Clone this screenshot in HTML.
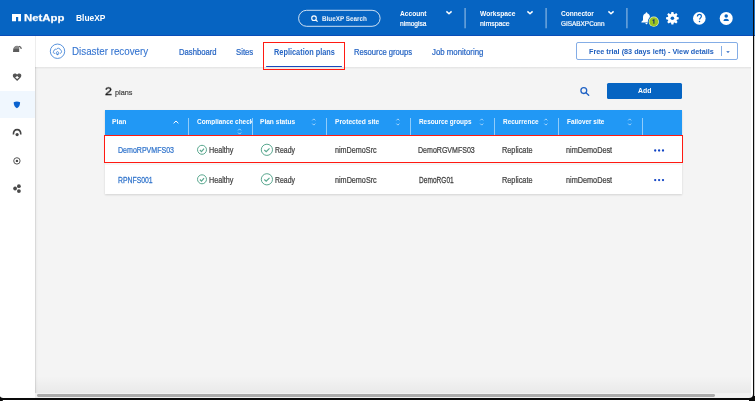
<!DOCTYPE html>
<html><head><meta charset="utf-8">
<style>
*{box-sizing:border-box;margin:0;padding:0}
html,body{width:755px;height:401px;overflow:hidden;background:#fff;font-family:"Liberation Sans",sans-serif}
div,svg{position:absolute}
.t{white-space:nowrap;line-height:1;transform-origin:0 0.8467em;will-change:transform}
</style></head><body>
<!-- top bar -->
<div style="left:0;top:0;width:755px;height:35px;background:#0664c2"></div>
<div style="left:0;top:35px;width:755px;height:1px;background:#0a4db8"></div>
<svg style="left:0;top:0" width="755" height="36">
<path d="M12,14 H21 V21.2 H18.2 V17 H16 V21.2 H12 Z" fill="#fff"/>
<rect x="298.6" y="10.3" width="81.5" height="16" rx="8" fill="none" stroke="rgba(255,255,255,0.8)" stroke-width="1"/>
<circle cx="314" cy="18.2" r="2.3" fill="none" stroke="#fff" stroke-width="1.1"/>
<line x1="315.8" y1="20" x2="317.6" y2="21.6" stroke="#fff" stroke-width="1.2"/>
<polyline points="446.4,11.4 449,13.7 451.6,11.4" fill="none" stroke="#fff" stroke-width="1.5" stroke-linejoin="round"/>
<polyline points="527.4,11.4 530,13.7 532.6,11.4" fill="none" stroke="#fff" stroke-width="1.5" stroke-linejoin="round"/>
<polyline points="608.4,11.4 611,13.7 613.6,11.4" fill="none" stroke="#fff" stroke-width="1.5" stroke-linejoin="round"/>
<rect x="464.4" y="8" width="1.4" height="20.3" fill="rgba(255,255,255,0.45)"/>
<rect x="545.4" y="8" width="1.4" height="20.3" fill="rgba(255,255,255,0.45)"/>
<rect x="626.2" y="8" width="1.4" height="20.3" fill="rgba(255,255,255,0.45)"/>
<!-- bell -->
<path d="M646.5,12.3 C646,12.3 645.7,12.7 645.7,13.2 C643.8,13.8 643,15.4 643,17.4 L643,19.6 C643,20.6 642.2,21.2 641.4,21.7 L641.4,22.5 L651.6,22.5 L651.6,21.7 C650.8,21.2 650,20.6 650,19.6 L650,17.4 C650,15.4 649.2,13.8 647.3,13.2 C647.3,12.7 647,12.3 646.5,12.3 Z" fill="#fff"/>
<path d="M645.4,23 C645.5,23.9 646,24.3 646.5,24.3 C647,24.3 647.5,23.9 647.6,23 Z" fill="#fff"/>
<circle cx="653.8" cy="21.7" r="6" fill="#0664c2"/>
<circle cx="653.8" cy="21.7" r="5.1" fill="#e8f0c0"/>
<circle cx="653.8" cy="21.7" r="4.5" fill="#9cc423"/>
<path d="M652.6,20.5 L653.9,19.8 L653.9,23.8" fill="none" stroke="#16306a" stroke-width="1.1"/>
<!-- gear -->
<path fill="#fff" fill-rule="evenodd" d="M671.03,13.81 L671.40,11.98 L673.40,11.98 L673.77,13.81 L674.61,14.15 L676.16,13.12 L677.58,14.54 L676.55,16.09 L676.89,16.93 L678.72,17.30 L678.72,19.30 L676.89,19.67 L676.55,20.51 L677.58,22.06 L676.16,23.48 L674.61,22.45 L673.77,22.79 L673.40,24.62 L671.40,24.62 L671.03,22.79 L670.19,22.45 L668.64,23.48 L667.22,22.06 L668.25,20.51 L667.91,19.67 L666.08,19.30 L666.08,17.30 L667.91,16.93 L668.25,16.09 L667.22,14.54 L668.64,13.12 L670.19,14.15 Z"/>
<circle cx="672.4" cy="18.3" r="1.8" fill="#0664c2"/>
<!-- help -->
<circle cx="699.3" cy="18.4" r="6.3" fill="#fff"/>
<path d="M697.4,16.4 C697.4,15 698.2,14.3 699.4,14.3 C700.6,14.3 701.4,15.1 701.4,16.2 C701.4,17.7 699.6,17.9 699.6,19.6" fill="none" stroke="#0664c2" stroke-width="1.15"/>
<circle cx="699.5" cy="21.4" r="0.75" fill="#0664c2"/>
<!-- user -->
<circle cx="726.2" cy="18.4" r="6.5" fill="#fff"/>
<circle cx="726.2" cy="16.1" r="1.75" fill="#0664c2"/>
<path d="M723.5,21 C723.5,19.6 724.6,18.8 726.2,18.8 C727.8,18.8 728.9,19.6 728.9,21 Z" fill="#0664c2"/>
</svg>

<!-- sidebar -->
<div style="left:0;top:36px;width:35px;height:365px;background:#fff"></div>
<div style="left:0;top:90.7px;width:35px;height:27.5px;background:#f0f7fe"></div>
<!-- main -->
<div style="left:35px;top:36px;width:716px;height:357px;background:#f4f4f4"></div>
<div style="left:35px;top:36px;width:3px;height:357px;background:linear-gradient(90deg,rgba(0,0,0,0.05),rgba(0,0,0,0))"></div>
<div style="left:35px;top:36px;width:716px;height:31px;background:#fff"></div>
<div style="left:35px;top:66.6px;width:716px;height:2.6px;background:linear-gradient(rgba(0,0,0,0.07),rgba(0,0,0,0.01))"></div>
<div style="left:34.6px;top:36px;width:1.4px;height:357px;background:rgba(0,0,0,0.07)"></div>
<div style="left:35px;top:376px;width:716px;height:17px;background:linear-gradient(rgba(0,0,0,0),rgba(0,0,0,0.045))"></div>
<div style="left:35px;top:393px;width:716px;height:5px;background:#f1f1f1"></div>
<div style="left:37px;top:394px;width:678px;height:2.8px;background:#ababab;border-radius:1.4px"></div>

<svg style="left:0;top:36px" width="35" height="170" viewBox="0 36 35 170">
<!-- cloud -->
<path d="M13,52 L13.2,49.6 C13.5,47.6 14.8,46 16.8,45.8 L18.2,45.9 C18.9,46.6 19.2,47.6 19.2,49 L19.2,52 Z" fill="#5c5c5c"/>
<path d="M13.3,48.8 C13.8,47.2 15,46.1 16.8,45.9 L18.2,46 C18.7,46.6 19,47.6 19.1,48.8 Z" fill="#8a8a8a"/>
<path d="M18.9,46.4 C20.3,46.6 21.2,47.4 21.3,48.9" fill="none" stroke="#555" stroke-width="1.2"/>
<!-- heart -->
<path d="M17.1,81 L13.6,77.4 C12.4,76 12.6,73.6 14.8,73.4 C16,73.3 16.7,74 17.1,74.6 C17.5,74 18.2,73.3 19.4,73.4 C21.6,73.6 21.8,76 20.6,77.4 Z" fill="#555"/>
<path d="M17.1,75.9 V79.1 M15.5,77.5 H18.7" stroke="#fff" stroke-width="1.2"/>
<!-- shield -->
<path d="M13.7,102.2 C15.5,101.2 18.3,101.2 20.1,102.2 C20.1,105.2 19,107.3 16.9,108.2 C14.8,107.3 13.7,105.2 13.7,102.2 Z" fill="#0a62cf"/>
<!-- arc -->
<path d="M13.4,134.6 C13.4,131.4 15,129.6 17.1,129.6 C19.2,129.6 20.8,131.4 20.8,134.6" fill="none" stroke="#444" stroke-width="1.6"/>
<circle cx="17.1" cy="134.6" r="1.6" fill="#444"/>
<!-- circle -->
<circle cx="16.9" cy="160.9" r="3.2" fill="none" stroke="#555" stroke-width="1"/>
<circle cx="16.9" cy="160.9" r="1.2" fill="#444"/>
<!-- dots -->
<circle cx="18.9" cy="186.2" r="1.9" fill="#4a4a4a"/>
<circle cx="15.1" cy="188.5" r="1.9" fill="#4a4a4a"/>
<circle cx="18.9" cy="191.1" r="1.9" fill="#4a4a4a"/>
</svg>

<!-- header icon -->
<svg style="left:40px;top:36px" width="40" height="32" viewBox="40 36 40 32">
<circle cx="57.5" cy="51.25" r="7.2" fill="none" stroke="#3b7fd6" stroke-width="0.85"/>
<path d="M55.2,53.4 H54.5 C53.2,53.4 52.9,51.8 53.8,51.1 C54,49.3 55.7,48.9 56.4,49.4 C57.1,47.7 60,47.8 60.4,49.9 C61.9,50.1 62,52.9 60.4,53.3 H59.8" fill="none" stroke="#3b7fd6" stroke-width="0.85"/>
<path d="M56.5,54.2 C56.2,53.4 56.3,51.6 57.5,51.6 C58.7,51.6 58.8,53.4 58.5,54.2 Z" fill="none" stroke="#3b7fd6" stroke-width="0.8"/>
<circle cx="57.5" cy="54.5" r="0.7" fill="#3b7fd6"/>
</svg>

<!-- active tab box & underline -->
<div style="left:265.7px;top:65.5px;width:76.5px;height:1.8px;background:#1848bd;border-radius:1px"></div>
<div style="left:262.8px;top:42px;width:82.1px;height:28.3px;border:1.7px solid #ff1a12"></div>
<!-- free trial -->
<div style="left:576.4px;top:42.3px;width:161.8px;height:17.8px;border:1px solid #84ade6;border-radius:2px;background:#fff"></div>
<div style="left:721px;top:46.4px;width:1px;height:10px;background:#84ade6"></div>
<svg style="left:720px;top:45px" width="15" height="12" viewBox="720 45 15 12"><polygon points="726.2,51.2 729.8,51.2 728,53.1" fill="#2261bf"/></svg>

<!-- search & add -->
<svg style="left:575px;top:82px" width="20" height="18" viewBox="575 82 20 18">
<circle cx="583.8" cy="90.6" r="2.9" fill="none" stroke="#2062c4" stroke-width="1.3"/>
<line x1="586" y1="92.8" x2="588.7" y2="95.2" stroke="#2062c4" stroke-width="1.4" stroke-linecap="round"/>
</svg>
<div style="left:606.9px;top:83.1px;width:75.2px;height:15.6px;background:#0664c2;border-radius:1.5px"></div>

<!-- table -->
<div style="left:104.5px;top:110.2px;width:577.8px;height:83.4px;background:#fff;box-shadow:0 1px 2px rgba(0,0,0,0.14)"></div>
<div style="left:104.5px;top:110.2px;width:577.8px;height:24.8px;background:#2198f5"></div>
<div style="left:188.2px;top:118px;width:0.9px;height:17px;background:rgba(255,255,255,0.5)"></div>
<div style="left:252.1px;top:118px;width:0.9px;height:17px;background:rgba(255,255,255,0.5)"></div>
<div style="left:326.4px;top:118px;width:0.9px;height:17px;background:rgba(255,255,255,0.5)"></div>
<div style="left:410.4px;top:118px;width:0.9px;height:17px;background:rgba(255,255,255,0.5)"></div>
<div style="left:494.3px;top:118px;width:0.9px;height:17px;background:rgba(255,255,255,0.5)"></div>
<div style="left:558.4px;top:118px;width:0.9px;height:17px;background:rgba(255,255,255,0.5)"></div>
<div style="left:642px;top:118px;width:0.9px;height:17px;background:rgba(255,255,255,0.5)"></div>
<svg style="left:100px;top:110px" width="590" height="90" viewBox="100 110 590 90">
<polyline points="173.6,123.3 176,121 178.4,123.3" fill="none" stroke="#fff" stroke-width="1"/>
<g fill="none" stroke="rgba(255,255,255,0.75)" stroke-width="0.8">
<polyline points="238.1,130.4 239.6,128.9 241.1,130.4"/><polyline points="238.1,132.6 239.6,134.1 241.1,132.6"/>
<polyline points="312.3,120.4 313.8,118.9 315.3,120.4"/><polyline points="312.3,123.6 313.8,125.1 315.3,123.6"/>
<polyline points="396.4,120.4 397.9,118.9 399.4,120.4"/><polyline points="396.4,123.6 397.9,125.1 399.4,123.6"/>
<polyline points="480.2,120.4 481.7,118.9 483.2,120.4"/><polyline points="480.2,123.6 481.7,125.1 483.2,123.6"/>
<polyline points="544.4,120.4 545.9,118.9 547.4,120.4"/><polyline points="544.4,123.6 545.9,125.1 547.4,123.6"/>
<polyline points="628.2,120.4 629.7,118.9 631.2,120.4"/><polyline points="628.2,123.6 629.7,125.1 631.2,123.6"/>
</g>
<rect x="104.5" y="163.6" width="577.8" height="0.8" fill="#e8e8e8"/>
<g fill="none" stroke="#5aa88f" stroke-width="1">
<circle cx="202" cy="149.8" r="4.5"/><polyline stroke-width="1.2" points="199.9,150 201.5,151.6 204,148.6"/>
<circle cx="202" cy="179.3" r="4.5"/><polyline stroke-width="1.2" points="199.9,179.5 201.5,181.1 204,178.1"/>
<circle cx="266.9" cy="149.8" r="5.6"/><polyline stroke-width="1.2" points="264.3,150 266.2,151.7 269.5,148.4"/>
<circle cx="266.9" cy="179.3" r="5.6"/><polyline stroke-width="1.2" points="264.3,179.5 266.2,181.2 269.5,177.9"/>
</g>
<g fill="#1144c4">
<circle cx="655.2" cy="150.5" r="1.15"/><circle cx="659.1" cy="150.5" r="1.15"/><circle cx="663" cy="150.5" r="1.15"/>
<circle cx="655.2" cy="180.1" r="1.15"/><circle cx="659.1" cy="180.1" r="1.15"/><circle cx="663" cy="180.1" r="1.15"/>
</g>
</svg>
<div style="left:103.8px;top:134.9px;width:578.9px;height:27.7px;border:1.7px solid #ff1a12"></div>

<div class='t' style='left:24.03px;top:12.08px;font-size:11.380px;font-weight:bold;color:#fff;transform:scaleY(0.871);-webkit-text-stroke:0.25px #fff'>NetApp</div>
<div class='t' style='left:75.97px;top:14.28px;font-size:8.412px;font-weight:bold;color:#fff;transform:scaleY(1.106);'>BlueXP</div>
<div class='t' style='left:321.89px;top:16.39px;font-size:6.343px;font-weight:bold;color:#fff;transform:scaleY(0.958);opacity:.95'>BlueXP Search</div>
<div class='t' style='left:399.71px;top:11.16px;font-size:6.635px;font-weight:bold;color:#fff;transform:scaleY(1.046);'>Account</div>
<div class='t' style='left:399.69px;top:20.55px;font-size:6.641px;font-weight:normal;color:#fff;transform:scaleY(1.089);-webkit-text-stroke:0.2px #fff'>nimogisa</div>
<div class='t' style='left:480.16px;top:11.21px;font-size:6.666px;font-weight:bold;color:#fff;transform:scaleY(1.057);'>Workspace</div>
<div class='t' style='left:479.53px;top:20.92px;font-size:6.951px;font-weight:normal;color:#fff;transform:scaleY(1.046);-webkit-text-stroke:0.2px #fff'>nimspace</div>
<div class='t' style='left:560.70px;top:10.96px;font-size:6.591px;font-weight:bold;color:#fff;transform:scaleY(1.004);'>Connector</div>
<div class='t' style='left:560.64px;top:20.85px;font-size:6.413px;font-weight:normal;color:#fff;transform:scaleY(0.982);-webkit-text-stroke:0.2px #fff'>GISABXPConn</div>
<div class='t' style='left:72.26px;top:46.80px;font-size:9.805px;font-weight:normal;color:#3474d0;transform:scaleY(1.038);-webkit-text-stroke:0.1px #3474d0'>Disaster recovery</div>
<div class='t' style='left:179.10px;top:49.46px;font-size:7.697px;font-weight:normal;color:#2766c4;transform:scaleY(1.245);-webkit-text-stroke:0.2px #2766c4'>Dashboard</div>
<div class='t' style='left:236.39px;top:49.10px;font-size:7.757px;font-weight:normal;color:#2766c4;transform:scaleY(1.080);-webkit-text-stroke:0.2px #2766c4'>Sites</div>
<div class='t' style='left:273.65px;top:49.06px;font-size:7.364px;font-weight:bold;color:#2766c4;transform:scaleY(1.184);'>Replication plans</div>
<div class='t' style='left:353.97px;top:48.89px;font-size:7.654px;font-weight:normal;color:#2766c4;transform:scaleY(1.096);-webkit-text-stroke:0.2px #2766c4'>Resource groups</div>
<div class='t' style='left:431.77px;top:48.97px;font-size:7.840px;font-weight:normal;color:#2766c4;transform:scaleY(1.059);-webkit-text-stroke:0.2px #2766c4'>Job monitoring</div>
<div class='t' style='left:588.56px;top:48.06px;font-size:7.251px;font-weight:bold;color:#2261bf;transform:scaleY(1.102);'>Free trial (83 days left) - View details</div>
<div class='t' style='left:105.08px;top:85.13px;font-size:12.503px;font-weight:normal;color:#161616;transform:scaleY(0.857);-webkit-text-stroke:0.4px #161616'>2</div>
<div class='t' style='left:114.79px;top:88.75px;font-size:7.276px;font-weight:normal;color:#444;transform:scaleY(1.018);;-webkit-text-stroke:0.2px #444'>plans</div>
<div class='t' style='left:638.23px;top:87.79px;font-size:6.865px;font-weight:bold;color:#fff;transform:scaleY(1.122);'>Add</div>
<div class='t' style='left:111.86px;top:118.56px;font-size:6.897px;font-weight:bold;color:#fff;transform:scaleY(0.981);'>Plan</div>
<div class='t' style='left:196.64px;top:118.79px;font-size:6.414px;font-weight:bold;color:#fff;transform:scaleY(1.091);width:55.36px;overflow:hidden;'>Compliance check</div>
<div class='t' style='left:260.39px;top:119.06px;font-size:6.583px;font-weight:bold;color:#fff;transform:scaleY(0.984);'>Plan status</div>
<div class='t' style='left:335.13px;top:118.90px;font-size:6.698px;font-weight:bold;color:#fff;transform:scaleY(0.986);'>Protected site</div>
<div class='t' style='left:419.02px;top:119.10px;font-size:6.398px;font-weight:bold;color:#fff;transform:scaleY(1.030);'>Resource groups</div>
<div class='t' style='left:502.62px;top:119.13px;font-size:6.484px;font-weight:bold;color:#fff;transform:scaleY(0.996);'>Recurrence</div>
<div class='t' style='left:566.51px;top:119.10px;font-size:6.422px;font-weight:bold;color:#fff;transform:scaleY(1.030);'>Failover site</div>
<div class='t' style='left:118.37px;top:147.02px;font-size:7.067px;font-weight:normal;color:#3275cc;transform:scaleY(1.234);;-webkit-text-stroke:0.2px #3275cc'>DemoRPVMFS03</div>
<div class='t' style='left:118.20px;top:177.94px;font-size:6.851px;font-weight:normal;color:#3275cc;transform:scaleY(1.322);;-webkit-text-stroke:0.2px #3275cc'>RPNFS001</div>
<div class='t' style='left:209.03px;top:146.89px;font-size:7.217px;font-weight:normal;color:#444444;transform:scaleY(1.208);;-webkit-text-stroke:0.2px #444444'>Healthy</div>
<div class='t' style='left:274.62px;top:148.45px;font-size:6.920px;font-weight:normal;color:#444444;transform:scaleY(1.219);;-webkit-text-stroke:0.2px #444444'>Ready</div>
<div class='t' style='left:334.51px;top:146.87px;font-size:7.216px;font-weight:normal;color:#444444;transform:scaleY(1.204);;-webkit-text-stroke:0.2px #444444'>nimDemoSrc</div>
<div class='t' style='left:501.99px;top:146.79px;font-size:7.347px;font-weight:normal;color:#444444;transform:scaleY(1.189);;-webkit-text-stroke:0.2px #444444'>Replicate</div>
<div class='t' style='left:566.07px;top:146.80px;font-size:7.294px;font-weight:normal;color:#444444;transform:scaleY(1.190);;-webkit-text-stroke:0.2px #444444'>nimDemoDest</div>
<div class='t' style='left:208.61px;top:177.29px;font-size:7.217px;font-weight:normal;color:#444444;transform:scaleY(1.208);;-webkit-text-stroke:0.2px #444444'>Healthy</div>
<div class='t' style='left:274.62px;top:178.25px;font-size:6.920px;font-weight:normal;color:#444444;transform:scaleY(1.219);;-webkit-text-stroke:0.2px #444444'>Ready</div>
<div class='t' style='left:335.08px;top:176.87px;font-size:7.235px;font-weight:normal;color:#444444;transform:scaleY(1.204);;-webkit-text-stroke:0.2px #444444'>nimDemoSrc</div>
<div class='t' style='left:501.99px;top:177.19px;font-size:7.347px;font-weight:normal;color:#444444;transform:scaleY(1.189);;-webkit-text-stroke:0.2px #444444'>Replicate</div>
<div class='t' style='left:566.07px;top:176.80px;font-size:7.294px;font-weight:normal;color:#444444;transform:scaleY(1.190);;-webkit-text-stroke:0.2px #444444'>nimDemoDest</div>
<div class='t' style='left:418.35px;top:147.03px;font-size:7.069px;font-weight:normal;color:#444444;transform:scaleY(1.236);;-webkit-text-stroke:0.2px #444444'>DemoRGVMFS03</div>
<div class='t' style='left:418.50px;top:177.62px;font-size:6.580px;font-weight:normal;color:#444444;transform:scaleY(1.486);;-webkit-text-stroke:0.2px #444444'>DemoRG01</div>

<!-- window frame -->
<svg style="left:0;top:0" width="755" height="401">
<rect x="754" y="0" width="1" height="35" fill="#2a8ef0"/>
<rect x="753" y="0" width="1.2" height="397" fill="#0a0a0a"/>
<rect x="0" y="398" width="749" height="2" fill="#0a0a0a"/>
<path d="M749,398 Q753,398 753,394 L753,396 L755,396 L755,401 L749,401 Z" fill="#0a0a0a"/>
<rect x="3" y="400" width="746" height="1" fill="#fff"/>
<path d="M0,396.3 C0.6,397.6 1.6,398 3,398 L3,400.2 L2.4,401 L0,401 Z" fill="#0a0a0a"/>
</svg>
</body></html>
